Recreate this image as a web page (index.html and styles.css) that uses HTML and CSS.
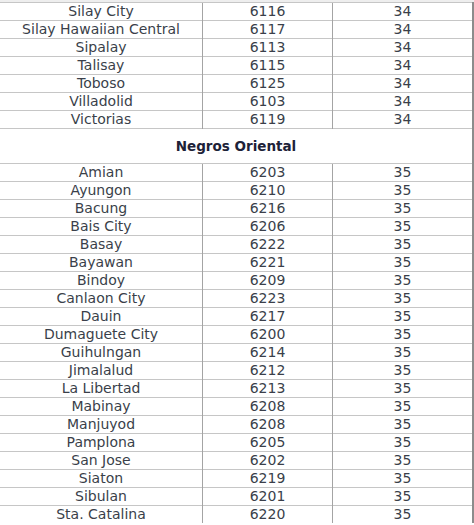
FILE: index.html
```html
<!DOCTYPE html>
<html>
<head>
<meta charset="utf-8">
<link rel="stylesheet" href="styles.css">
</head>
<body>
<table class="zip">
<tbody>
<tr><td class="town">Silay City</td><td class="code">6116</td><td class="area">34</td></tr>
<tr><td class="town">Silay Hawaiian Central</td><td class="code">6117</td><td class="area">34</td></tr>
<tr><td class="town">Sipalay</td><td class="code">6113</td><td class="area">34</td></tr>
<tr><td class="town">Talisay</td><td class="code">6115</td><td class="area">34</td></tr>
<tr><td class="town">Toboso</td><td class="code">6125</td><td class="area">34</td></tr>
<tr><td class="town">Villadolid</td><td class="code">6103</td><td class="area">34</td></tr>
<tr><td class="town">Victorias</td><td class="code">6119</td><td class="area">34</td></tr>
<tr class="province"><td colspan="3">Negros Oriental</td></tr>
<tr><td class="town">Amian</td><td class="code">6203</td><td class="area">35</td></tr>
<tr><td class="town">Ayungon</td><td class="code">6210</td><td class="area">35</td></tr>
<tr><td class="town">Bacung</td><td class="code">6216</td><td class="area">35</td></tr>
<tr><td class="town">Bais City</td><td class="code">6206</td><td class="area">35</td></tr>
<tr><td class="town">Basay</td><td class="code">6222</td><td class="area">35</td></tr>
<tr><td class="town">Bayawan</td><td class="code">6221</td><td class="area">35</td></tr>
<tr><td class="town">Bindoy</td><td class="code">6209</td><td class="area">35</td></tr>
<tr><td class="town">Canlaon City</td><td class="code">6223</td><td class="area">35</td></tr>
<tr><td class="town">Dauin</td><td class="code">6217</td><td class="area">35</td></tr>
<tr><td class="town">Dumaguete City</td><td class="code">6200</td><td class="area">35</td></tr>
<tr><td class="town">Guihulngan</td><td class="code">6214</td><td class="area">35</td></tr>
<tr><td class="town">Jimalalud</td><td class="code">6212</td><td class="area">35</td></tr>
<tr><td class="town">La Libertad</td><td class="code">6213</td><td class="area">35</td></tr>
<tr><td class="town">Mabinay</td><td class="code">6208</td><td class="area">35</td></tr>
<tr><td class="town">Manjuyod</td><td class="code">6208</td><td class="area">35</td></tr>
<tr><td class="town">Pamplona</td><td class="code">6205</td><td class="area">35</td></tr>
<tr><td class="town">San Jose</td><td class="code">6202</td><td class="area">35</td></tr>
<tr><td class="town">Siaton</td><td class="code">6219</td><td class="area">35</td></tr>
<tr><td class="town">Sibulan</td><td class="code">6201</td><td class="area">35</td></tr>
<tr><td class="town">Sta. Catalina</td><td class="code">6220</td><td class="area">35</td></tr>
</tbody>
</table>
</body>
</html>
```
FILE: styles.css
```css
html, body {
  margin: 0;
  padding: 0;
  background: #ffffff;
}
body {
  padding-top: 2px;
  background: linear-gradient(#eeeeee 0, #eeeeee 2px, #ffffff 2px);
  overflow: hidden;
  height: 525px;
}
.zip {
  width: 474px;
  border-collapse: collapse;
  table-layout: fixed;
  font-family: "DejaVu Sans", Verdana, sans-serif;
  font-size: 14px;
  color: #3a3f4a;
  border-right: 2px solid #8c8c8c;
}
.zip td {
  padding: 0;
  height: 17px;
  line-height: 17px;
  text-align: center;
  border-top: 1px solid #c6c6c6;
  white-space: nowrap;
}
.zip .town { width: 202px; }
.zip .code { width: 129px; border-left: 1px solid #a4a4a4; }
.zip .area { border-left: 1px solid #a4a4a4; }
.zip .province td {
  height: 33px;
  line-height: 33px;
  font-size: 13.5px;
  font-weight: bold;
  color: #1d2238;
  padding-top: 1px;
}
```
